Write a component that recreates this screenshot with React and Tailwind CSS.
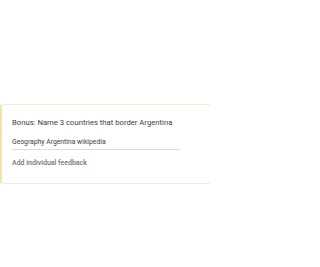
export default function App() {
  return (
    <div className="w-[210px] h-[267px] bg-white overflow-hidden" style={{ fontFamily: 'Roboto, "Liberation Sans", sans-serif' }}>
      <div className="mt-[104px] w-[214px] h-[80px] border-t border-b border-l-2 border-t-[#f2ecd8] border-b-[#ececec] border-l-[#f0e2b4] rounded-l-[2px] pl-[10px] pt-[12px]">
        <div className="text-[7.7px] leading-[12px] text-[#3c4043]">Bonus: Name 3 countries that border Argentina</div>
        <div className="mt-[8px] w-[168px] border-b border-[#dadce0] pb-[2px] text-[6.8px] leading-[10px] text-[#3c4043]">
          Geography Argentina wikipedia
        </div>
        <div className="mt-[8px] text-[7px] leading-[10px] font-medium text-[#70757a]">Add individual feedback</div>
      </div>
    </div>
  );
}
